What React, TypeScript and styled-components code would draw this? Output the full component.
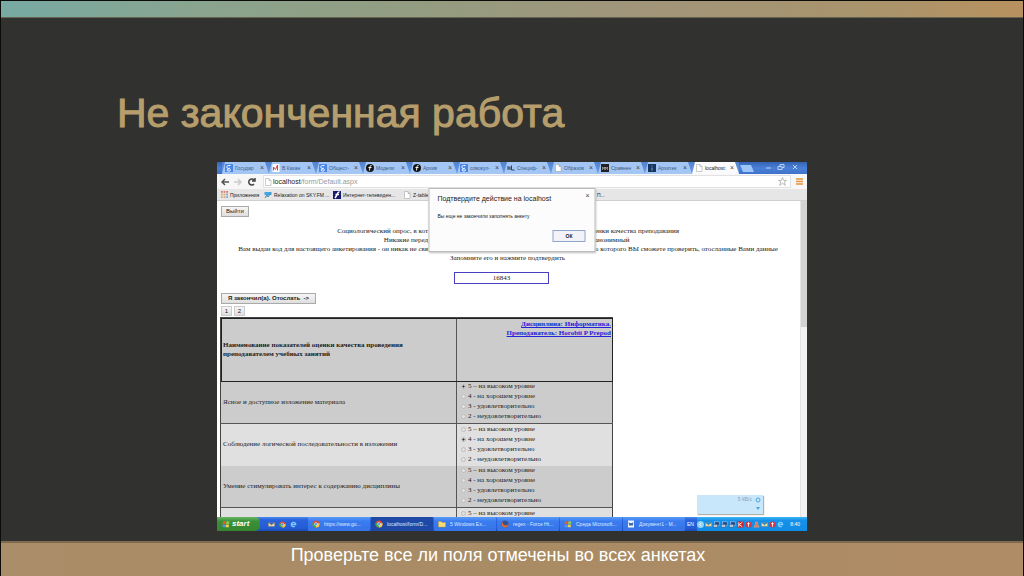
import React from "react";
import styled, { createGlobalStyle } from "styled-components";

const Global = createGlobalStyle`
  *, *::before, *::after { box-sizing: border-box; }
  body { margin: 0; background: #000; }
  button, input { font: inherit; color: inherit; margin: 0; padding: 0; }
`;

const sans = `"Liberation Sans", Arial, sans-serif`;
const serif = `"Liberation Serif", "Times New Roman", serif`;

const Slide = styled.div`
  display: flex;
  flex-direction: column;
  min-height: 100vh;
  border: 1px solid #0b0b0a;
  background: #31312f;
  font-family: ${sans};
`;

const TopStrip = styled.div`
  height: 17px;
  background: linear-gradient(90deg, #77aaa3 0%, #8aa48e 20%, #949c80 42%, #a1957a 62%, #a9946c 85%, #b8915f 100%);
  border-bottom: 1px solid #66644f;
`;

const Main = styled.main`
  flex: 1;
  padding: 71px 0 10px;
`;

const Title = styled.h1`
  margin: 0 0 25px;
  padding-left: 116px;
  font-size: 41px;
  font-weight: 400;
  line-height: 48px;
  color: #b69e6c;
  -webkit-text-stroke: 1px #b69e6c;
`;

const Footer = styled.footer`
  display: flex;
  justify-content: center;
  height: 35px;
  padding-right: 28px;
  border-top: 2px solid #7d6a50;
  background: linear-gradient(90deg, #aa8e69, #a98b64 50%, #b08c66);
  color: #fff;
  font-size: 18px;
  line-height: 25px;
`;

const Shot = styled.section`
  position: relative;
  width: 100%;
  max-width: 590px;
  margin: 0 auto;
  background: #fff;
  color: #222;
  font-size: 7px;
`;

const TabBar = styled.div`
  display: flex;
  height: 12px;
  padding-left: 5px;
  background: linear-gradient(#3563b5, #4a80d8 50%, #3f72cc);
`;

const Tab = styled.div<{ $active?: boolean }>`
  display: flex;
  align-items: center;
  gap: 2px;
  flex: 0 1 47px;
  min-width: 0;
  height: 12px;
  padding: 0 5px 0 3px;
  background: ${(p) => (p.$active ? "#fbfbfd" : "#a4c6f5")};
  clip-path: polygon(0 100%, 3px 0, 43px 0, 100% 100%);
  color: ${(p) => (p.$active ? "#222" : "#3f5a84")};
  font-size: 5px;
  line-height: 10px;
  white-space: nowrap;
  span { flex: 1; }
`;

const CloseMark = styled.button`
  border: 0;
  background: none;
  color: #444;
  font-size: 7px;
  line-height: 8px;
`;

const TabStrip = styled.div`
  display: flex;
  flex: 0 1 517px;
  min-width: 0;
  background: linear-gradient(#5183d0, #6e9ee2);
`;

const NewTab = styled.button`
  width: 14px;
  height: 7px;
  margin: 3px 0 0 1px;
  border: 0;
  background: #9cc5f8;
  clip-path: polygon(0 0, 11px 0, 100% 100%, 3px 100%);
`;

const WindowControls = styled.div`
  display: flex;
  flex: 1;
  justify-content: flex-end;
  align-items: center;
  padding-right: 8px;
  height: 9px;
`;

const Toolbar = styled.div`
  display: flex;
  align-items: center;
  gap: 5px;
  height: 15px;
  padding: 0 4px;
  background: #f7f7f7;
`;

const Address = styled.div`
  display: flex;
  align-items: center;
  flex: 1;
  gap: 1px;
  height: 13px;
  padding-right: 3px;
  border: 1px solid #e2e2e2;
  background: #fff;
`;

const AddressText = styled.div`
  flex: 1;
  font-size: 7px;
  line-height: 11px;
  color: #9a9a9a;
  b { font-weight: 400; color: #222; }
`;

const Bookmarks = styled.nav`
  display: flex;
  align-items: center;
  height: 12px;
  padding-left: 4px;
  background: #e6e6e6;
  border-bottom: 1px solid #cfcfcf;
  font-size: 5px;
  white-space: nowrap;
`;

const Bookmark = styled.a<{ $w: number }>`
  display: flex;
  align-items: center;
  gap: 2px;
  width: ${(p) => p.$w}px;
  color: #222;
  text-decoration: none;
`;

const Viewport = styled.div`
  position: relative;
  display: flex;
  height: 316px;
  overflow: hidden;
`;

const Document = styled.div`
  flex: 1;
  padding: 5px 3px 0;
  font-family: ${serif};
  font-size: 7px;
  line-height: 9px;
`;

const Scrollbar = styled.div`
  width: 7px;
  background: #f1f1f1;
  border-left: 1px solid #e4e4e4;
  &::before { content: ""; display: block; height: 126px; background: #d2d2d2; }
`;

const FormButton = styled.button`
  display: block;
  height: 11px;
  margin-left: 1px;
  padding: 0 4px;
  border: 1px solid #aaa;
  background: linear-gradient(#f6f6f6, #dedede);
  font-family: ${sans};
  font-size: 6px;
  line-height: 9px;
  white-space: pre;
`;

const SendButton = styled(FormButton)`
  margin-top: 9px;
  width: 95px;
  font-weight: 700;
`;

const Pager = styled.div`
  display: flex;
  gap: 1px;
  margin: 2px 0 1px;
  button { width: 11px; height: 10px; padding: 0; line-height: 8px; border-color: #ccc; }
`;

const Intro = styled.div`
  margin-top: 10px;
`;

const IntroLine = styled.p`
  display: grid;
  grid-template-columns: 208px 167px 1fr;
  margin: 0;
  white-space: nowrap;
  span:first-child { justify-self: end; }
  span:last-child { grid-column: 3; }
`;

const IntroCentre = styled.p`
  margin: 0;
  text-align: center;
  padding-right: 2px;
`;

const CodeRow = styled.div`
  display: flex;
  justify-content: center;
  margin-top: 9px;
  padding-right: 14px;
`;

const CodeInput = styled.input`
  width: 95px;
  height: 12px;
  border: 1px solid #4a3fc0;
  outline: 0;
  text-align: center;
`;

const Survey = styled.table`
  width: 393px;
  border-collapse: collapse;
  border: 1px solid #444;
  th, td { padding: 0 2px; text-align: left; }
  td + td { vertical-align: top; }
  td + td, th + th { border-left: 1px solid #555; }
`;

const HeadRow = styled.tr`
  height: 64px;
  background: #ccc;
  outline: 1px solid #222;
  outline-offset: -1px;
  th:first-child { width: 236px; }
  th:last-child { vertical-align: top; text-align: right; padding: 2px 1px; }
  a { color: #2222d8; }
`;

const QuestionRow = styled.tr<{ $light?: boolean; $line?: boolean }>`
  height: 42px;
  background: ${(p) => (p.$light ? "#e0e0e0" : "#ccc")};
  border-top: ${(p) => (p.$line ? "1px solid #555" : "0")};
`;

const Option = styled.label`
  display: flex;
  align-items: center;
  gap: 2px;
  height: 10px;
  padding-left: 2px;
`;

const Radio = styled.input`
  appearance: none;
  width: 5px;
  height: 5px;
  border: 1px solid #bdbdbd;
  border-radius: 50%;
  background: #e2e2e2;
  &:checked { border-color: #bbb; background: radial-gradient(#222 35%, #ddd 60%); }
`;

const Dialog = styled.div`
  position: absolute;
  top: 26px;
  left: 50%;
  width: 167px;
  height: 64px;
  transform: translateX(-50%);
  display: flex;
  flex-direction: column;
  padding: 3px 9px 9px 8px;
  border: 1px solid #bcbcbc;
  background: #fcfcfc;
  box-shadow: 0 1px 2px #0004;
  color: #222;
`;

const DialogHead = styled.div`
  display: flex;
  justify-content: space-between;
  font-size: 7px;
  line-height: 13px;
  button { margin: -5px -4px 0 0; }
`;

const DialogText = styled.p`
  margin: 7px 0 0;
  font-size: 5px;
  line-height: 9px;
`;

const OkButton = styled.button`
  align-self: flex-end;
  width: 33px;
  height: 12px;
  margin-top: auto;
  border: 1px solid #8fa6cf;
  background: #f3f3f7;
  font-size: 5px;
  font-weight: 700;
  line-height: 10px;
`;

const Notice = styled.div`
  position: absolute;
  right: 44px;
  bottom: 3px;
  display: flex;
  justify-content: flex-end;
  gap: 3px;
  width: 66px;
  height: 19px;
  padding: 2px;
  background: #c8e7fa;
  box-shadow: 1px 1px 1px #b5b0a8;
  color: #8a9db0;
  font-size: 5px;
  line-height: 5px;
`;

const Taskbar = styled.div`
  display: flex;
  height: 14px;
  background: linear-gradient(#4a8bf0, #2a63dc 20%, #245cd6 80%, #1c49b4);
  color: #fff;
  font-size: 5px;
  line-height: 14px;
  white-space: nowrap;
`;

const Start = styled.button`
  display: flex;
  align-items: center;
  gap: 2px;
  width: 43px;
  padding-left: 5px;
  border: 0;
  border-radius: 0 5px 5px 0;
  background: linear-gradient(#6db866, #3a9037 30%, #35862f);
  color: #fff;
  font-size: 8px;
  font-style: italic;
  font-weight: 700;
`;

const QuickLaunch = styled.div`
  display: flex;
  align-items: center;
  gap: 4px;
  width: 48px;
  padding-left: 8px;
`;

const Task = styled.button<{ $active?: boolean }>`
  display: flex;
  align-items: center;
  flex: 0 0 62px;
  gap: 4px;
  margin-right: 1px;
  padding-left: 4px;
  border: 0;
  border-radius: 1px;
  background: ${(p) => (p.$active ? "#1e49a6" : "linear-gradient(#5b9bf8, #3a7cf0 30%, #3573e6)")};
  color: #dfeaff;
`;

const Lang = styled.span`
  width: 11px;
  padding-left: 1px;
`;

const Tray = styled.div`
  display: flex;
  align-items: center;
  flex: 1;
  gap: 1px;
  padding-right: 7px;
  background: linear-gradient(#3cb4f5, #1491ea 25%, #128be3);
  time { margin-left: auto; }
`;

type GlyphName = "g" | "gmail" | "f" | "hl" | "page" | "m" | "i" | "tv" | "apps" | "sky" | "chrome" | "folder" | "flag" | "word" | "ie" | "arrow" | "red" | "k" | "pc" | "bell" | "env" | "firefox";

const art: Record<GlyphName, React.ReactNode> = {
  g: <><rect width="16" height="16" rx="1" fill="#4a86e8" /><path d="M11 3H7a3 3 0 1 0 2 5c-2 2 2 2 2 4 0 3-7 3-7 0 0-2 3-2 4-2" fill="none" stroke="#fff" strokeWidth="2" /></>,
  gmail: <><rect x="1" width="14" height="16" fill="#fff" /><path d="M3 13V6l4 5 4-9v11" fill="none" stroke="#d9443a" strokeWidth="2" /></>,
  f: <><circle cx="8" cy="8" r="8" fill="#151515" /><path d="M11 3c-3-1-3 2-4 10M5 7h6" fill="none" stroke="#fff" strokeWidth="2" /></>,
  hl: <path d="M2 4v8M2 8h4M6 5v7M9 3v9h6" fill="none" stroke="#345" strokeWidth="2" />,
  page: <path d="M3 1h7l4 4v10H3zM10 1v4h4" fill="#fff" stroke="#999" />,
  m: <><rect width="16" height="16" fill="#222" /><path d="M3 12V6l2 3 2-3v6m2 0V6l2 3 2-3v6" fill="none" stroke="#ddd" /></>,
  i: <><rect width="16" height="16" fill="#15355c" /><path d="M8 3v2M8 7v6" stroke="#7fb0e4" strokeWidth="2" /></>,
  tv: <><rect width="16" height="16" fill="#191970" /><path d="M13 2C8 1 9 8 4 14M5 7h7" fill="none" stroke="#fff" strokeWidth="3" /></>,
  apps: <>{[0, 6, 12].map((x) => [0, 6, 12].map((y) => <rect key={`${x}-${y}`} x={x} y={y} width="4" height="4" fill={y === 0 ? "#dc7966" : x === 12 ? "#7ca0d0" : "#d5aa70"} />))}</>,
  sky: <><path d="M1 2h14v6H1z" fill="#44a6de" /><path d="M2 14l4-6 2 4 5-7" fill="none" stroke="#2c82bd" strokeWidth="2" /></>,
  chrome: <><circle cx="8" cy="8" r="7" fill="#df4937" /><path d="M8 8L1.500 5A7 7 0 0 0 8 15z" fill="#35a852" /><path d="M8 8l7-2a7 7 0 0 1-7 9z" fill="#f7ca3d" /><circle cx="8" cy="8" r="3" fill="#4c8bf5" stroke="#fff" /></>,
  folder: <path d="M1 3h5l2 2h7v9H1z" fill="#f6dc78" stroke="#c79b32" />,
  flag: <><path d="M2 3l5-1v6l-6 1z" fill="#e85c34" /><path d="M9 2l6 1-1 6-6-1z" fill="#8cc852" /><path d="M1 10l6-1-1 6-5-1z" fill="#4d96ed" /><path d="M8 9l6 1-1 5-6-1z" fill="#f4cf43" /></>,
  word: <><rect x="2" y="1" width="12" height="14" fill="#eef4ff" /><path d="M4 5l2 6 2-5 2 5 2-6" fill="none" stroke="#28559b" strokeWidth="2" /></>,
  ie: <path d="M3 8h10a5 5 0 1 0-2 4" fill="none" stroke="#7cc9ff" strokeWidth="3" />,
  arrow: <><circle cx="8" cy="8" r="8" fill="#8fd2fa" /><path d="M10 4L6 8l4 4" fill="none" stroke="#fff" strokeWidth="2" /></>,
  red: <><circle cx="8" cy="8" r="7" fill="#d33144" /><path d="M8 3v10M5 6h6" stroke="#fff" strokeWidth="2" /></>,
  k: <><rect x="1" y="1" width="14" height="14" fill="#c9252b" /><path d="M4 3v10M12 3L5 8l7 5" fill="none" stroke="#fff" strokeWidth="2" /></>,
  pc: <><rect x="4" y="2" width="11" height="8" fill="#254c84" stroke="#d6e8fa" /><rect x="1" y="8" width="9" height="6" fill="#bdc9d5" stroke="#405065" /></>,
  bell: <path d="M6 2h4l1 6 3 6H2l3-6z" fill="#e2754c" stroke="#e9b7a0" />,
  env: <path d="M1 4h14v8H1zM1 4l7 5 7-5" fill="#f0dfb0" stroke="#a98a50" />,
  firefox: <><circle cx="8" cy="8" r="7" fill="#35548f" /><path d="M3 3c0 6 3 8 8 8 3 0 4-3 3-6 3 5-1 10-6 10S-1 9 3 3" fill="#e56b2b" /></>,
};

const GlyphSvg = styled.svg`
  flex-shrink: 0;
`;

const Glyph = ({ name, size = 8 }: { name: GlyphName; size?: number }) => (
  <GlyphSvg width={size} height={size} viewBox="0 0 16 16" aria-hidden="true">{art[name]}</GlyphSvg>
);

const tabs: [GlyphName, string][] = [
  ["g", "Государ"], ["gmail", "В Казан"], ["g", "Общест-"], ["f", "Модели"], ["f", "Архив"],
  ["g", "совокуп-"], ["hl", "Специф-"], ["page", "Образов"], ["m", "Сравнен"], ["i", "Архитек"],
];

const options = ["5 – на высоком уровне", "4 - на хорошем уровне", "3 - удовлетворительно", "2 - неудовлетворительно"];

const questions: { text: string; checked?: number; light?: boolean; line?: boolean }[] = [
  { text: "Ясное и доступное изложение материала", checked: 0 },
  { text: "Соблюдение логической последовательности в изложении", checked: 1, light: true, line: true },
  { text: "Умение стимулировать интерес к содержанию дисциплины" },
  { text: "", light: true, line: true },
];

const tasks: [GlyphName, string][] = [
  ["chrome", "https://www.go..."], ["chrome", "localhost/form/D..."], ["folder", "5 Windows Ex..."],
  ["firefox", "regex - Force Ht..."], ["flag", "Среда Microsoft..."], ["word", "Документ1 - M..."],
];

const trayIcons: GlyphName[] = ["arrow", "env", "pc", "pc", "pc", "k", "red", "bell", "env", "red", "ie"];

export default function App() {
  return (
    <>
      <Global />
      <Slide>
        <TopStrip />
        <Main>
          <Title>Не законченная работа</Title>
          <Shot>
            <TabBar>
              <TabStrip>
                {tabs.map(([icon, label]) => (
                  <Tab key={label}><Glyph name={icon} /><span>{label}</span><CloseMark aria-label="Закрыть вкладку">×</CloseMark></Tab>
                ))}
                <Tab $active><Glyph name="page" /><span>localhost:</span><CloseMark aria-label="Закрыть вкладку">×</CloseMark></Tab>
              </TabStrip>
              <NewTab aria-label="Новая вкладка" />
              <WindowControls>
                <svg width="35" height="8" viewBox="0 0 35 8" fill="none" stroke="#b9d2f5">
                  <path d="M2 5h5M14 3.500h4v3h-4zM16 3V1.500h4v3h-2M29 2l4 4M33 2l-4 4" />
                </svg>
              </WindowControls>
            </TabBar>
            <Toolbar>
              <svg width="37" height="10" viewBox="0 0 37 10" fill="none" strokeWidth="1.500">
                <path d="M8 5H1M4 2L1 5l3 3" stroke="#555" />
                <path d="M13 5h7M17 2l3 3-3 3" stroke="#ccc" />
                <path d="M33 3a3 3 0 1 0 0 4M34 1v3h-3" stroke="#444" />
              </svg>
              <Address>
                <Glyph name="page" size={8} />
                <AddressText><b>localhost</b>/form/Default.aspx</AddressText>
                <svg width="9" height="9" viewBox="0 0 16 16"><path d="M8 1l2 5h5l-4 3 2 6-5-4-5 4 2-6-4-3h5z" fill="#fff" stroke="#888" /></svg>
              </Address>
              <svg width="7" height="7" viewBox="0 0 7 7"><path d="M0 1h7M0 3.500h7M0 6h7" stroke="#e59443" strokeWidth="1.700" /></svg>
            </Toolbar>
            <Bookmarks>
              <Bookmark $w={43} href="#"><Glyph name="apps" size={7} />Приложения</Bookmark>
              <Bookmark $w={69} href="#"><Glyph name="sky" />Relaxation on SKY.FM ...</Bookmark>
              <Bookmark $w={70} href="#"><Glyph name="tv" />Интернет-телевиден...</Bookmark>
              <Bookmark $w={194} href="#"><Glyph name="page" />Z-table</Bookmark>
              <Bookmark $w={20} href="#">П...</Bookmark>
            </Bookmarks>
            <Viewport>
              <Document>
                <FormButton>Выйти</FormButton>
                <Intro>
                  <IntroLine><span>Социологический опрос, в кот</span><span>енки качества преподавания</span></IntroLine>
                  <IntroLine><span>Никакие перед</span><span>анонимный</span></IntroLine>
                  <IntroLine><span>Вам выдан код для настоящего анкетирования - он никак не свя</span><span>о которого ВЫ сможете проверить, отосланные Вами данные</span></IntroLine>
                  <IntroCentre>Запомните его и нажмите подтвердить</IntroCentre>
                </Intro>
                <CodeRow><CodeInput aria-label="Код" defaultValue="16843" /></CodeRow>
                <SendButton>{"Я закончил(а). Отослать  ->"}</SendButton>
                <Pager><FormButton>1</FormButton><FormButton>2</FormButton></Pager>
                <Survey>
                  <thead>
                    <HeadRow>
                      <th>Наименование показателей оценки качества проведения преподавателем учебных занятий</th>
                      <th><a href="#">Дисциплина: Информатика.<br />Преподаватель: Horobii P Prepod</a></th>
                    </HeadRow>
                  </thead>
                  <tbody>
                    {questions.map((q, n) => (
                      <QuestionRow key={n} $light={q.light} $line={q.line}>
                        <td>{q.text}</td>
                        <td>
                          {(q.text ? options : options.slice(0, 1)).map((o, k) => (
                            <Option key={o}><Radio type="radio" name={`q${n}`} defaultChecked={q.checked === k} />{o}</Option>
                          ))}
                        </td>
                      </QuestionRow>
                    ))}
                  </tbody>
                </Survey>
              </Document>
              <Scrollbar />
              <Notice>
                <span>5 КБ/с</span>
                <svg width="6" height="14" viewBox="0 0 6 14"><circle cx="3" cy="3" r="2" fill="none" stroke="#4da3dd" /><path d="M1 10h4l-2 3z" fill="#4da3dd" /></svg>
              </Notice>
            </Viewport>
            <Taskbar>
              <Start><Glyph name="flag" />start</Start>
              <QuickLaunch><Glyph name="env" size={7} /><Glyph name="chrome" size={7} /><Glyph name="ie" size={7} /></QuickLaunch>
              {tasks.map(([icon, label], n) => (
                <Task key={label} $active={n === 1}><Glyph name={icon} size={8} />{label}</Task>
              ))}
              <Lang>EN</Lang>
              <Tray>{trayIcons.map((t, n) => <Glyph key={n} name={t} size={7} />)}<time>8:40</time></Tray>
            </Taskbar>
            <Dialog role="dialog">
              <DialogHead>Подтвердите действие на localhost<CloseMark aria-label="Закрыть">×</CloseMark></DialogHead>
              <DialogText>Вы еще не закончили заполнять анкету</DialogText>
              <OkButton>ОК</OkButton>
            </Dialog>
          </Shot>
        </Main>
        <Footer>Проверьте все ли поля отмечены во всех анкетах</Footer>
      </Slide>
    </>
  );
}
